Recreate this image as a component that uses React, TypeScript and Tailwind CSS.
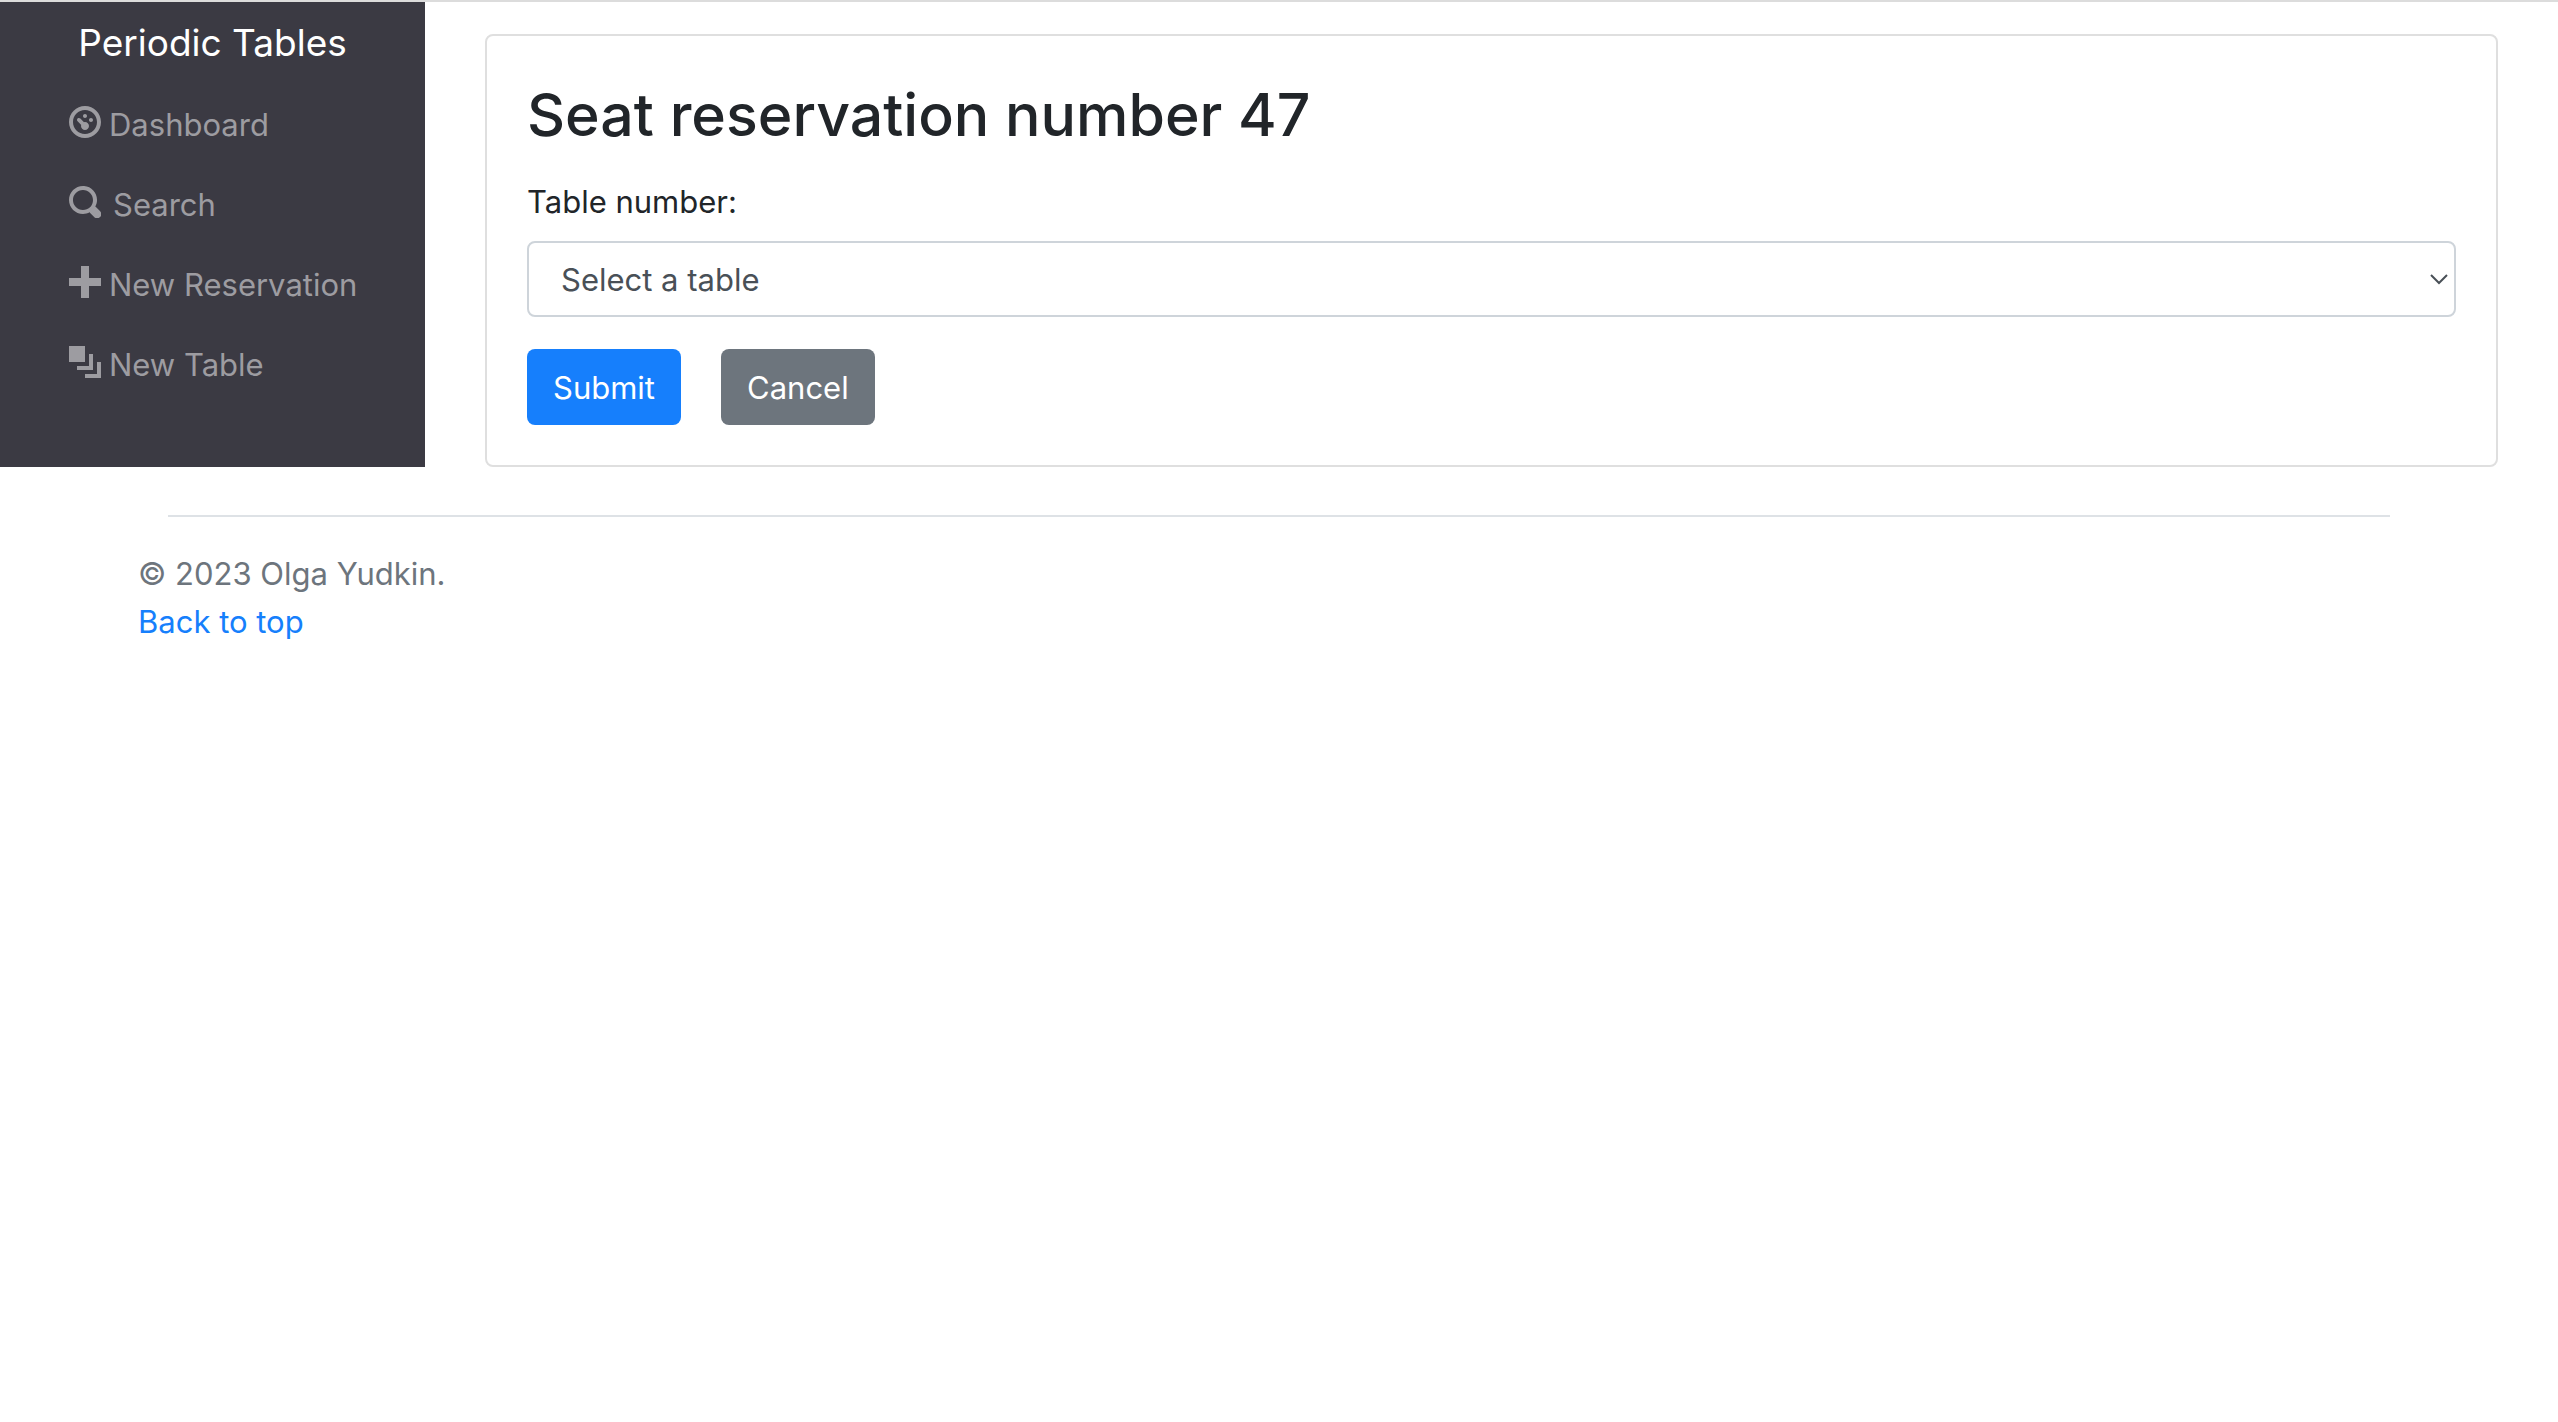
import React from "react";

type IconProps = { d: string };

function Icon({ d }: IconProps) {
  return (
    <svg viewBox="0 0 8 8" className="size-8 shrink-0 fill-current" aria-hidden="true">
      <path d={d} />
    </svg>
  );
}

const NAV_ITEMS = [
  {
    label: "Dashboard",
    gap: "gap-2",
    d: "M4 0c-2.2 0-4 1.8-4 4s1.8 4 4 4 4-1.8 4-4-1.8-4-4-4zm0 1c1.66 0 3 1.34 3 3s-1.34 3-3 3-3-1.34-3-3 1.34-3 3-3zm0 1c-.28 0-.5.22-.5.5s.22.5.5.5.5-.22.5-.5-.22-.5-.5-.5zm-1.66 1a.5.5 0 0 0-.19.84l.91.91c-.02.08-.06.16-.06.25 0 .55.45 1 1 1s1-.45 1-1-.45-1-1-1c-.09 0-.17.04-.25.06l-.91-.91a.5.5 0 0 0-.44-.16.5.5 0 0 0-.06 0zm3.16 0c-.28 0-.5.22-.5.5s.22.5.5.5.5-.22.5-.5-.22-.5-.5-.5z",
  },
  {
    label: "Search",
    gap: "gap-3",
    d: "M3.5 0c-1.93 0-3.5 1.57-3.5 3.5s1.57 3.5 3.5 3.5c.59 0 1.17-.14 1.66-.41a1 1 0 0 0 .13.13l1 1a1.02 1.02 0 1 0 1.44-1.44l-1-1a1 1 0 0 0-.16-.13c.27-.49.44-1.06.44-1.66 0-1.93-1.55-3.5-3.5-3.5zm0 1c1.39 0 2.5 1.11 2.5 2.5 0 .66-.24 1.27-.66 1.72-.01.01-.02.02-.03.03a1 1 0 0 0-.13.13c-.44.4-1.04.63-1.69.63-1.39 0-2.5-1.11-2.5-2.5s1.11-2.5 2.5-2.5z",
  },
  {
    label: "New Reservation",
    gap: "gap-2",
    d: "M3 0v3h-3v2h3v3h2v-3h3v-2h-3v-3h-2z",
  },
  {
    label: "New Table",
    gap: "gap-2",
    d: "M0 0v4h4v-4h-4zm5 2v3h-3v1h4v-4h-1zm2 2v3h-3v1h4v-4h-1z",
  },
];

function Sidebar() {
  return (
    <nav className="w-[425px] shrink-0 bg-[#3b3a43]">
      <a href="#" className="block pt-4 pb-3.5 text-center text-[37px] leading-[50px] text-white">
        Periodic Tables
      </a>
      <ul className="pl-[69px]">
        {NAV_ITEMS.map((item) => (
          <li key={item.label}>
            <a href="#" className={`flex h-20 items-start pt-4 text-[#9d9ca1] ${item.gap}`}>
              <span className="pt-2">
                <Icon d={item.d} />
              </span>
              <span className="pt-[3px] leading-[48px]">{item.label}</span>
            </a>
          </li>
        ))}
      </ul>
    </nav>
  );
}

function SeatForm() {
  return (
    <section className="mt-8 rounded-lg border-2 border-[#dfdfdf] p-10">
      <h2 className="mb-6 text-[59px] leading-[78px] font-medium">Seat reservation number 47</h2>
      <form>
        <label htmlFor="table_id" className="mb-[15px] block leading-[48px]">
          Table number:
        </label>
        <div className="relative">
          <select
            id="table_id"
            defaultValue=""
            className="block h-[76px] w-full appearance-none rounded-lg border-2 border-[#ced4da] bg-white px-8 pt-0.5 text-[#495057]"
          >
            <option value="">Select a table</option>
          </select>
          <svg
            viewBox="0 0 18 11"
            className="pointer-events-none absolute top-[33px] right-2 h-[11px] w-[18px] fill-none stroke-[#495057] stroke-2"
            aria-hidden="true"
          >
            <path d="M1 1l8 8 8-8" />
          </svg>
        </div>
        <div className="mt-8 flex gap-10">
          <button type="submit" className="h-[76px] rounded-lg bg-[#167ffc] px-[26px] pt-0.5 text-white">
            Submit
          </button>
          <button type="button" className="h-[76px] rounded-lg bg-[#6d757d] px-[26px] pt-0.5 text-white">
            Cancel
          </button>
        </div>
      </form>
    </section>
  );
}

export default function App() {
  return (
    <div className="min-h-screen border-t-2 border-[#dcdcdc] bg-white font-['Inter',sans-serif] text-[31px] text-[#212529]">
      <div className="flex">
        <Sidebar />
        <main className="min-w-0 flex-1 px-[60px]">
          <SeatForm />
        </main>
      </div>
      <footer className="mx-auto max-w-[2282px] pt-12 leading-[48px]">
        <hr className="mx-[30px] mb-[33px] border-t-2 border-[#dee2e6]" />
        <p className="text-[#6d757d]">© 2023 Olga Yudkin.</p>
        <p>
          <a href="#" className="text-[#167ffc]">
            Back to top
          </a>
        </p>
      </footer>
    </div>
  );
}
